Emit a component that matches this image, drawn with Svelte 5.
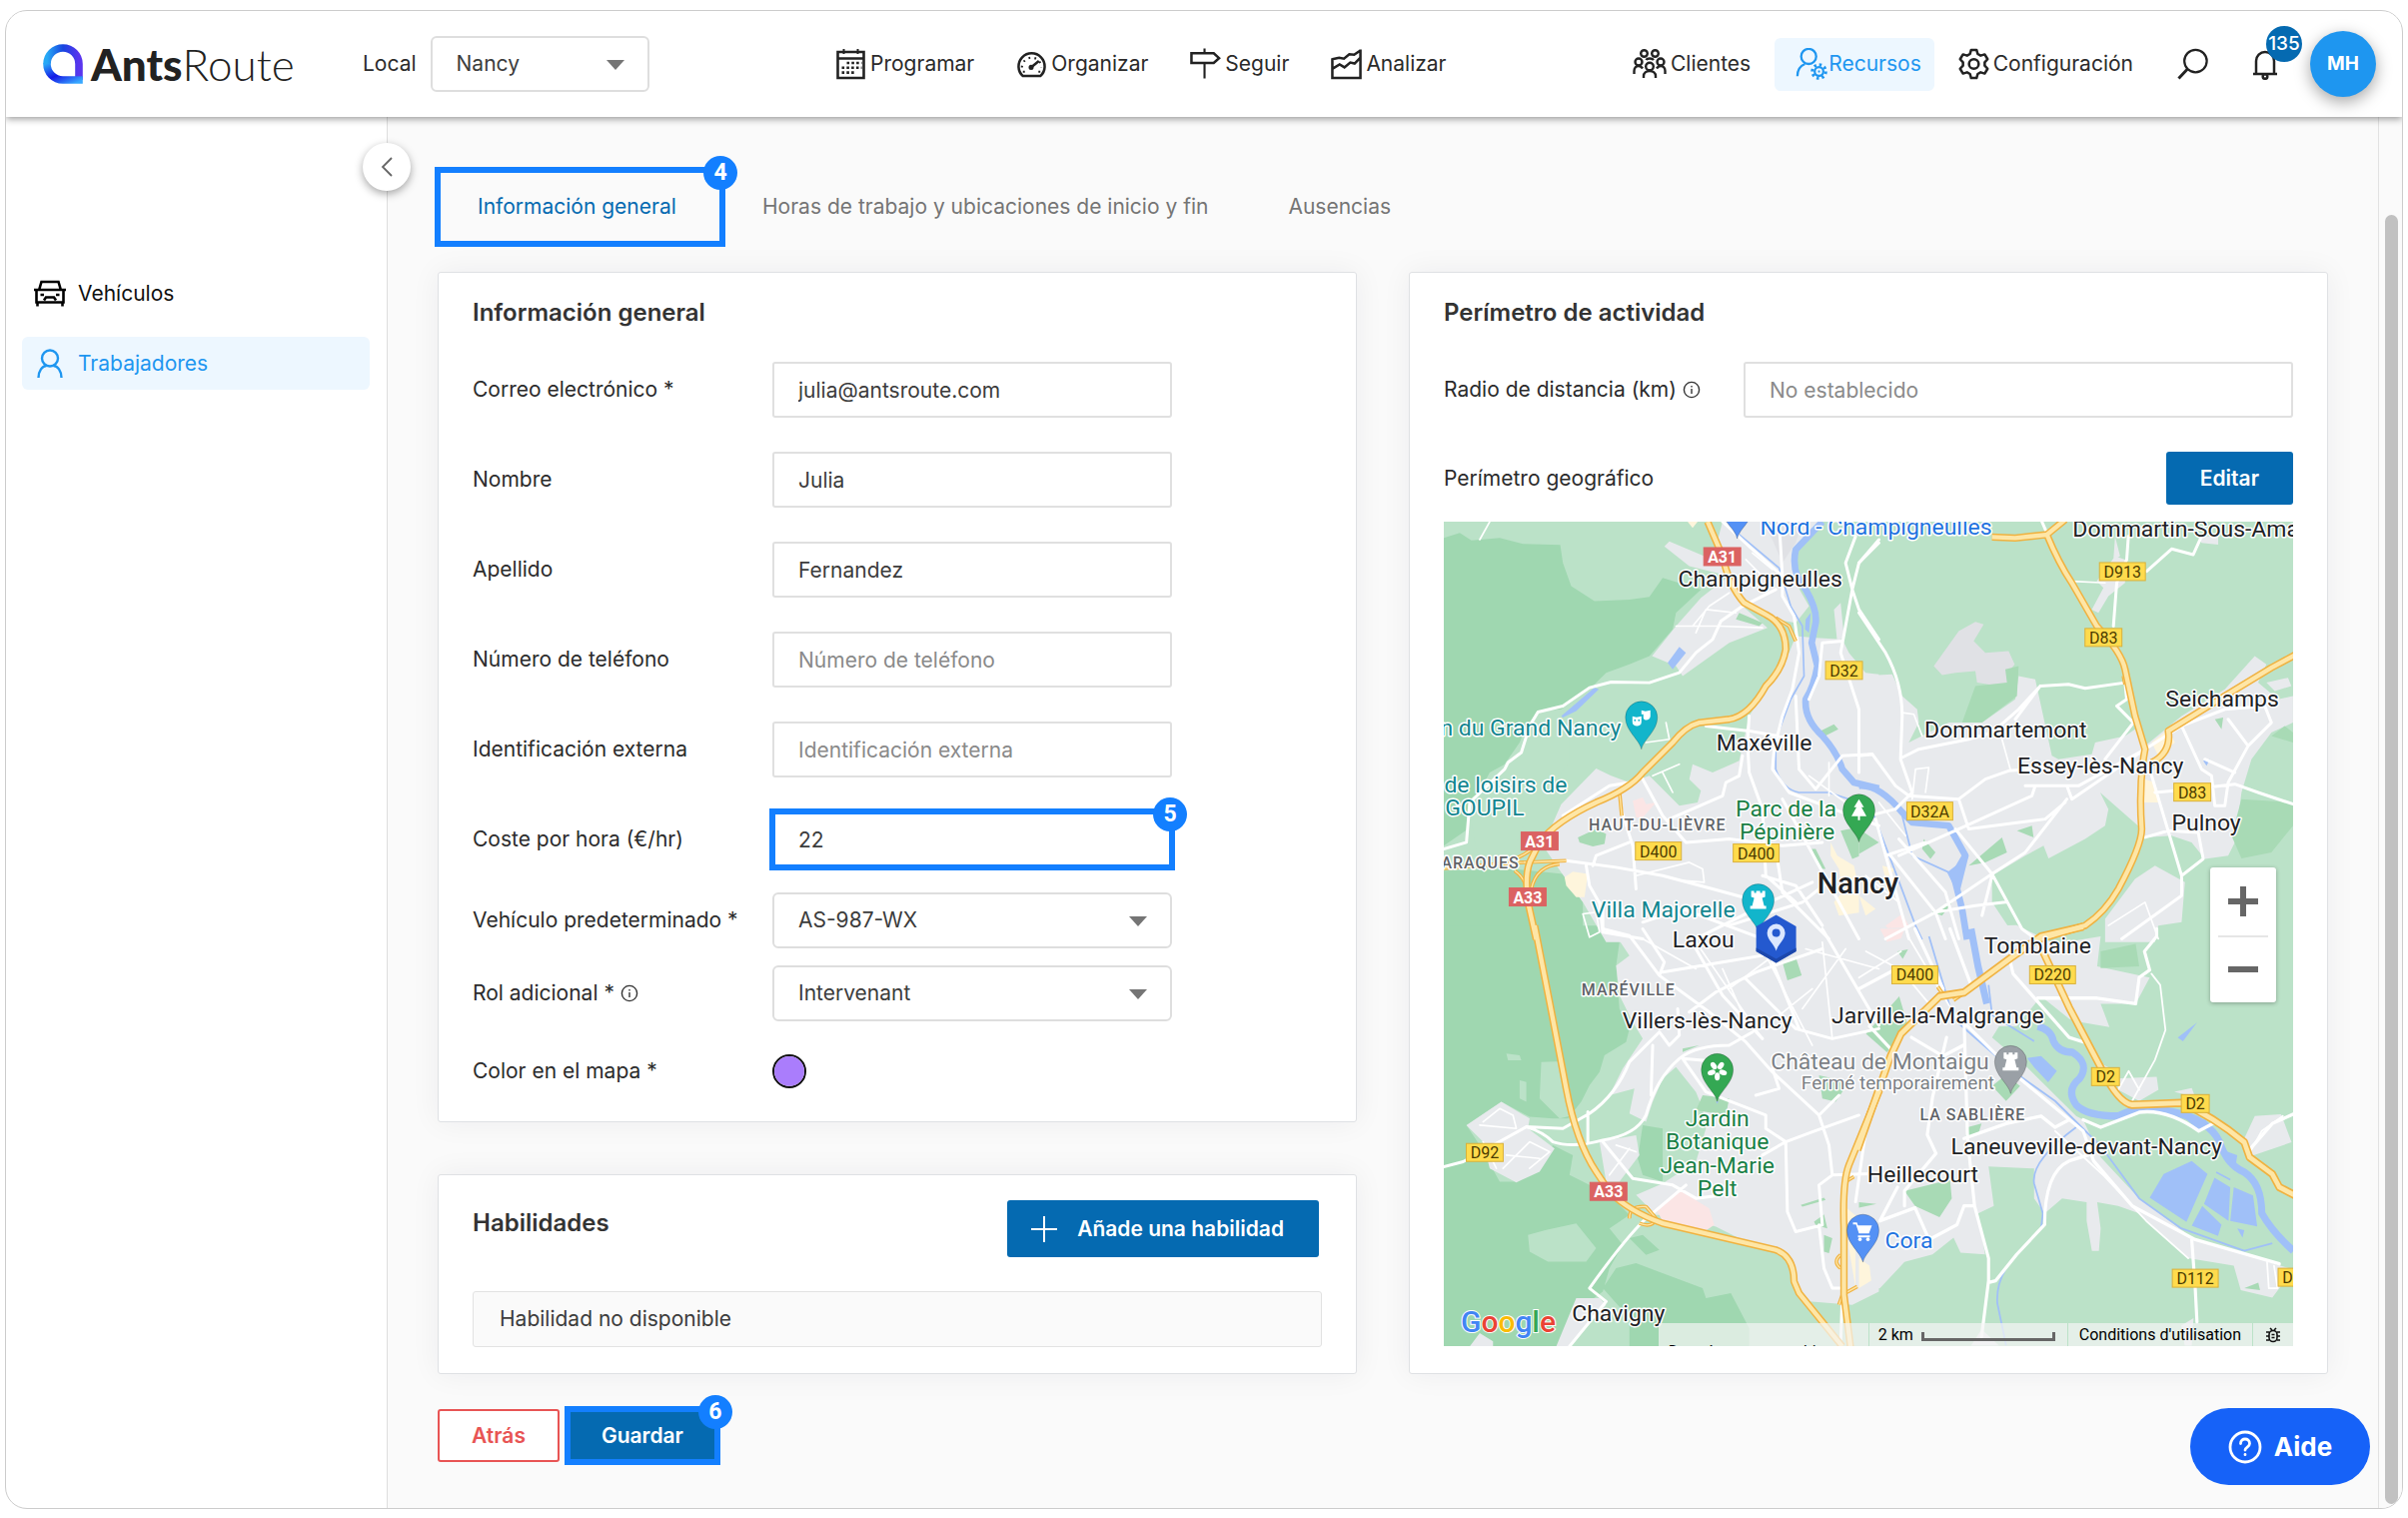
<script lang="ts">
  type Field = { id: string; label: string; value: string; placeholder?: string; step?: number };
  type Tile = {
    transform: string;
    wood?: string;
    clearing?: string;
    town: string;
    grey?: string;
    park: string;
    pink?: string;
    sand?: string;
    lake: string;
    river: string;
    canal: string;
    lane: string;
    street: string;
    highway: string;
    ramp?: string;
  };

  const tabs = ['Información general', 'Horas de trabajo y ubicaciones de inicio y fin', 'Ausencias'];
  let activeTab = 0;

  let fields: Field[] = [
    { id: 'email', label: 'Correo electrónico *', value: 'julia@antsroute.com' },
    { id: 'first-name', label: 'Nombre', value: 'Julia' },
    { id: 'last-name', label: 'Apellido', value: 'Fernandez' },
    { id: 'phone', label: 'Número de teléfono', value: '', placeholder: 'Número de teléfono' },
    { id: 'external-id', label: 'Identificación externa', value: '', placeholder: 'Identificación externa' },
    { id: 'cost', label: 'Coste por hora (€/hr)', value: '22', step: 5 }
  ];
  let color = '#aa7dfc';
  let radius = '';

  // Map geometry, one entry per tile, each in its own tile coordinates
  const tiles: Tile[] = [
    {
      transform: 'translate(-14 -12) scale(.3333)',
      wood: 'M42 85L90 70L125 92L210 85L280 103L392 106L400 160L425 230L495 275L600 270L660 262L700 205L815 240L740 310L730 360L660 440L600 465L530 490L490 530L430 575L395 600L325 605L290 650L270 700L235 750L180 830L120 870L115 960L42 1010ZM42 1085L250 1080L400 1095L460 1180L460 1290L42 1290Z',
      clearing: 'M180 790L235 760L275 730L300 640L420 610L420 760L300 900L250 1030L140 1030L120 900Z',
      town: 'M395 885L500 778L545 800L600 820L660 800L750 890L805 880L815 845L780 810L790 765L850 790L930 755L960 620L1010 540L1080 430L1100 380L1160 385L1240 390L1260 430L1310 490L1350 495L1350 1300L530 1300L460 1180L395 1090L340 1010ZM740 350L815 265L860 230L900 200L780 170L705 110L720 95L850 150L880 36L1180 36L1100 120L1100 220L1140 290L1100 340L1040 330L940 290L1015 355L900 400L760 500L740 470L668 440ZM1215 300L1235 280L1245 380L1225 400Z',
      grey: 'M1000 36L1120 36L1100 100L1060 160L1030 90Z',
      park: 'M445 985L500 960L530 975L525 1005L490 1012L450 1000ZM1235 965L1310 950L1345 1020L1270 1050ZM1165 670L1215 645L1228 660L1185 682ZM930 310L1000 340L990 350L920 330ZM1148 1020L1160 1020L1190 1080L1175 1080Z',
      pink: 'M610 875L640 865L650 885L680 880L640 925L620 925Z',
      sand: 'M405 1105L430 1088L475 1095L465 1165L440 1165L410 1130ZM1205 1000L1225 1040L1275 1070L1290 1140L1310 1150L1300 1210L1230 1220L1215 1180L1240 1150L1230 1080L1205 1040ZM775 36L805 36L790 55Z',
      lake: 'M715 460L750 412L770 430L730 480ZM395 620L495 535L508 540L440 605L400 625ZM1130 330L1145 310L1140 370L1128 360Z',
      river: 'M1180 36L1100 120Q1085 190 1130 240Q1165 300 1160 340L1148 400L1165 470Q1155 530 1130 570Q1125 630 1180 680Q1225 730 1240 780L1275 820L1350 838',
      canal: 'M930 75L1050 175L1085 290L1120 350L1125 500L1085 570L1040 690L1040 780Q1060 840 1110 850L1200 850L1290 880L1335 920',
      lane: 'M180 36L150 90M790 350L840 290L900 250M740 350L870 350L1000 355M800 370L830 300L920 310M950 150L1000 200M970 130L1030 180M650 700L720 690L710 640M670 800L750 765M700 790L730 850M620 1100L780 1060L820 1080L825 1120L760 1115M1140 800L1250 880M1200 760L1200 860M460 1215L500 1210L510 1270L480 1285Z',
      street: 'M42 1020L110 1000L120 880L225 780L235 760L275 730L300 650L325 608L400 590L480 535L545 518L660 520L750 490L800 430L850 390L875 335L940 290L1040 240M1050 36L1060 200L1060 260L1095 320L1110 430L1090 540L1060 620L1035 720L1030 780L1080 850L1240 910L1350 950M960 620L955 700L960 790L1000 900L1010 1100L1100 1180M880 36L960 110L1060 200M830 650L960 665L1100 690M1280 80L1250 160L1270 240L1235 430L1290 600L1290 790M1270 240L1290 300L1350 390M1350 100L1290 160L1270 240M1240 395L1180 400L1170 500L1140 570M410 1055L560 1075L700 1100L850 1140L960 1170M720 930L880 860L890 820L930 800L940 740M575 900L610 1010L620 1140M510 1180L520 1270L640 1290M640 810L700 920L770 1000L900 990L1060 1010L1180 1000M1100 560L1110 780L1160 840L1240 740L1330 735M470 1070L480 1130L520 1200L520 1270M400 920L540 830L600 820M490 1070L500 1040L600 1000M1040 1020L1060 1150L1200 1290M1000 1100L1100 1130L1180 1250M800 1290L1000 1190L1150 1120M900 1250L1120 1180L1220 1100M1060 870L1230 1180L1290 1290M640 1240L760 1200L1000 1290',
      highway: 'M835 36L880 140Q900 230 945 280L1010 315Q1070 345 1070 420Q1060 480 1010 530Q960 620 900 630L810 640Q770 650 730 700L640 790Q600 840 500 880Q380 935 330 1000L300 1060Q285 1100 295 1180L320 1292',
      ramp: 'M42 1078L240 1062L410 1055M1040 325L1080 350L1100 395M570 845L577 920M255 1085Q290 1110 292 1150M390 1065Q320 1070 305 1140M240 1055Q290 1040 330 1000'
    },
    {
      transform: 'translate(416 -12) scale(.3333)',
      town: 'M0 500L100 495L130 560L175 600L180 640L150 700L270 640L370 640L470 570L480 500L530 510L580 740L600 750L700 735L710 700L800 680L830 660L860 710L970 620L1100 540L1190 440L1225 465L1200 520L1260 570L1305 560L1305 640L1240 670L1180 750L1150 850L1130 1000L1110 1040L1040 1050L1000 1000L940 980L860 985L850 960L725 850L750 900L740 950L680 990L570 1048L555 1010L500 1040L400 1100L400 1180L480 1300L0 1300ZM700 300L735 235L715 215L770 140L800 150L800 220L750 260L720 310ZM740 1230L830 1110L890 1070L980 1120L970 1240L900 1250L890 1300L740 1300ZM770 80L785 140L765 150ZM1020 80L1080 80L1080 105L1030 100ZM1225 520L1290 505L1300 530L1250 545Z',
      grey: 'M225 470L300 365L350 337L375 345L345 395L380 430L450 425L468 465L445 495L450 535L355 520L350 485L290 490L250 497Z',
      park: 'M310 640L350 530L445 520L440 480L480 470L475 560L370 640ZM1120 980L1150 870L1305 880L1305 950L1240 1030L1150 1048ZM330 1070L430 985L445 1030L380 1060ZM195 990L230 1030L215 1050L190 1020ZM475 965L520 950L525 985ZM1070 630L1095 625L1090 660ZM220 1210L280 1180L250 1220ZM1240 680L1280 650L1305 670L1305 700ZM0 960L60 1000L0 1035Z',
      pink: 'M80 1250L130 1215L150 1250L110 1290Z',
      sand: 'M880 700L930 660L950 700L900 740ZM860 810L890 820L900 880L850 880ZM0 1160L50 1200L20 1220ZM70 1070L110 1080L80 1110Z',
      lake: 'M1035 755L1055 750L1045 770ZM265 1090L330 1040L300 1160Z',
      river: 'M0 830Q60 825 130 910L160 940L270 950L320 1040L285 1100L310 1200L325 1292',
      canal: 'M45 920L110 1090L170 1250L190 1292M130 920L160 1040L270 1090',
      lane: 'M640 215L740 220M130 610L165 615L190 680M60 880L140 980M160 870L170 780L210 775L200 850M750 1250L860 1180L900 1290M430 690L455 780M20 1100L120 1180',
      street: 'M0 310L80 430Q130 520 130 620L125 750L160 850L110 900L50 915M130 745L180 720L330 690L400 670L480 600L545 530L630 525L680 537L800 520M545 530L470 630M0 740L40 735L110 830L150 860L300 870L380 810L450 785L640 770M810 80L805 150L775 220L765 350M865 185L940 118L1005 135L1030 80M800 520L805 570L775 590L825 640L740 750M500 830L660 830L860 720L970 650L1100 600M120 1040L300 960L520 860L530 830M625 870L500 1030L400 1095L230 1210L80 1290M860 720L640 870L625 830M290 960L400 1095L490 1260L530 1290M300 870L330 960L560 930L620 880M50 930L150 1290M95 1040L230 1210L260 1290M970 650L1030 780L1060 800L1070 890L1100 890L1110 820L1170 710L1240 640L1220 590L1100 600M1110 630L1170 710M890 850L1000 840L1130 825L1200 850L1305 885M880 800L970 1100L970 1160L790 1290M860 985L930 965L1020 970L1035 1050L970 1100M1040 750L1130 790M230 1210L350 1190L440 1180M370 1220L400 1100M0 160L60 90M550 36L565 70M80 1040L200 1000M120 990L260 1150L300 1290',
      highway: 'M565 75L620 30M400 82L470 85L565 75Q600 160 640 220L715 350Q790 430 800 480L830 620L860 720Q840 830 850 960Q850 1010 780 1140Q740 1210 680 1250L540 1292M1320 432L1240 475L1100 560L930 665Q940 730 880 760',
      ramp: 'M795 500L800 525'
    },
    {
      transform: 'translate(-14 408) scale(.3333)',
      wood: 'M42 -10L540 -10L570 40L560 110L570 240L600 300L590 340L525 380L510 430L480 470L455 520L415 570L370 570L300 565L215 520L110 590L150 650L210 760L260 760L370 650L430 680L420 740L540 800L600 860L540 900L580 950L540 1020L520 1090L480 1120L440 1130L400 1230L380 1255L42 1255ZM520 1080L560 1020L620 1005L820 1080L830 1110L905 1095L960 1200L960 1255L600 1255L600 1170ZM640 590L700 600L700 760L640 740L625 690ZM600 930L640 920L690 965L650 980Z',
      clearing: 'M335 400L400 398L410 520L430 560L390 570L330 510ZM295 920L350 905L440 885L500 960L470 1000L355 1000L300 970ZM230 375L270 380L275 395L235 395ZM270 455L290 460L290 520L270 510Z',
      town: 'M540 -10L1350 -10L1350 1090L1270 1130L1140 1120L1100 1070L1080 980L950 940L860 895L750 860L680 860L620 800L700 765L800 700L830 600L820 540L800 490L740 415L700 450L670 520L650 580L600 555L615 480L540 500L580 420L640 330L610 280L570 200L560 110L600 80ZM110 590L215 520L300 570L295 600L375 660L330 730L260 762L180 720L160 640ZM510 640L620 620L630 680L570 760L530 760ZM380 1255L440 1110L510 1110L530 1130L420 1255ZM120 1255L150 1215L190 1240L190 1255Z',
      park: 'M1060 100L1100 85L1118 140L1075 155ZM820 500L900 510L890 560L800 545ZM1115 830L1185 808L1190 815L1120 835ZM1155 880L1185 858L1195 900L1160 890ZM1185 920L1210 930L1200 975L1185 970ZM1170 440L1260 460L1220 520L1180 510ZM1310 320L1350 290L1350 350ZM760 360L810 350L760 370Z',
      pink: 'M680 840L755 788L840 840L855 890L825 910L700 880Z',
      sand: 'M1255 840L1290 870L1330 980L1320 1050L1280 1080L1260 960Z',
      lake: 'M860 520L868 518L864 526Z',
      river: '',
      canal: '',
      lane: 'M160 640L200 720M150 590L260 600L250 560L210 540L160 580M220 720L300 640L360 670L300 720M230 680L330 690M540 740L600 660M560 650L620 670M1000 300L1150 180M900 180L1060 60M880 120L960 300M1130 60L1350 120M1250 60L1120 240M1180 40L1210 330M800 40L1000 330M1000 60L1150 350M640 30L800 120',
      street: 'M42 715L100 700L290 595L400 600L480 555Q560 500 600 400L690 310L720 350L750 320L745 240M290 595Q340 610 370 640Q430 660 520 635Q620 620 650 560Q680 450 750 390Q800 350 900 350L970 310M670 350L665 500M475 550L475 640M520 640L610 750L730 770L800 810L880 800M770 770L640 880Q580 940 480 1080L530 1120L420 1255M520 0L600 20L690 140L840 250L950 340L1030 430L1170 560L1200 650L1210 740L1350 735M700 130L880 100L1000 80M690 140L705 100L640 0M950 150L1100 300L1210 330L1350 300M760 390L830 490L960 540L1010 560L1010 600L1070 640L1150 610L1290 560M780 250L860 190L980 130L1180 60M1000 680L1070 640L1075 850L1100 910L1180 890L1170 770L1210 740M1170 890L1185 1020L1210 1080L1240 1080M1030 100L1110 300M1180 0L1350 290M980 500L1050 480L1030 420M1310 610L1280 820M1240 1100L1235 1255M800 60L880 200L1000 330M1170 560L1230 500M880 400L760 390',
      highway: 'M315 -10L360 220L410 480Q440 640 500 730L540 790Q600 850 700 885L1040 965Q1095 985 1095 1060L1110 1095L1240 1255M1352 485L1260 710Q1240 760 1245 900L1245 1100L1265 1258',
      ramp: 'M600 870Q600 830 650 835L680 870Q670 900 630 885M1235 980Q1210 1000 1235 1020M1285 1075L1240 1100L1230 1130M1250 760L1275 745'
    },
    {
      transform: 'translate(416 408) scale(.351 .375)',
      town: 'M-10 0L450 -10L560 40L690 20L680 100L780 120L830 130L790 200L690 200L715 262L640 250L600 240L520 180L450 260L400 260L380 290L480 370L620 500L640 510L690 610L800 720L930 810L950 830L1100 870L1240 910L1180 985L1090 965L1070 900L940 880L800 760L740 740L680 730L690 800L685 860L665 860L650 780L650 730L580 720L530 760L500 720L500 640L370 635L385 740L340 760L360 870L290 865L270 825L210 870L130 890L60 960L-10 970ZM735 400L850 395L855 430L800 460L740 430ZM1130 500L1205 495L1235 570L1110 610L1100 560ZM900 435L950 425L960 450ZM320 1113L350 1070L400 1113ZM920 1060L955 1040L950 1113L930 1113ZM690 360L735 380L700 390Z',
      park: 'M20 280L115 180L140 260L80 330ZM380 420L420 390L460 420L420 460ZM130 700L260 670L265 720L230 770L160 740ZM690 60L790 40L800 100L690 105ZM310 530L350 520L340 550L305 555ZM0 730L50 735L0 745ZM110 60L140 55L125 80ZM1100 960L1140 945L1145 965Z',
      pink: 'M60 0L130 0L120 25L80 35Z',
      sand: 'M0 880L30 900L35 940L0 960Z',
      lake: 'M830 718L870 655L950 620L995 655L935 783ZM1015 665L1060 690L1055 780L985 735ZM1070 690L1125 712L1137 795L1060 780ZM980 740L1035 790L1025 820L950 793ZM1050 595L1080 605L1075 635L1045 620ZM910 290L965 250L925 300ZM930 505L990 510L1000 530L970 538ZM480 345L520 340L565 380L540 410L500 370ZM1080 800L1100 805L1095 825Z',
      river: 'M320 0L340 100L365 200M510 260Q550 270 555 300Q570 330 610 330Q660 360 630 400Q590 430 620 470Q650 500 740 500Q800 470 900 490Q1000 510 1030 570Q1050 630 1100 650Q1150 680 1150 760Q1180 810 1240 860',
      canal: 'M200 20L270 240L440 380L560 460L690 580L800 720L920 800L1100 860L1180 840M620 530Q490 620 500 680L525 760L520 800L450 870Q390 930 395 1000L420 1113M370 150L380 230L500 300M1020 650L1060 670',
      lane: 'M835 120L860 150L875 270L845 350L780 460M740 430L770 380L800 430M1120 590L1150 540L1210 500M940 880L820 780L700 660L560 540M1165 890L1170 960L1195 960L1185 900M20 60L120 110L200 200M0 130L120 60M140 20L280 240',
      street: 'M260 0L320 150M160 0L240 160M300 250L460 400L640 540L670 620L780 740L960 830L1200 895M300 240L310 560L330 740L370 880L370 940L350 1090M370 945L390 940L450 870L530 790Q530 650 600 620L670 600M950 830L960 960L965 1050M640 510L690 530L800 490Q880 480 970 540L1020 515M430 80L440 120L600 290L650 305M510 185L680 185L790 200L800 130L830 110L815 60L850 20L850 0M130 740L130 700L220 600L195 550L210 450L250 290M330 740L300 740L280 790L200 830L160 745L60 780L110 690M300 560L420 520L520 500L560 530L600 510M120 100L0 160M150 290L240 340L300 310M30 260L100 330M1115 590L1180 520L1240 495',
      highway: 'M-4 590L90 340L120 280L230 180L300 170L430 80L520 20L640 -6M525 60L600 210L690 370Q740 465 780 470L920 465Q1010 500 1100 570L1115 610L1180 655L1200 690L1245 712',
      ramp: 'M225 155L240 175M270 190L310 165'
    }
  ];

  const shields = [
    { x: 279, y: 35, name: 'A31', main: true },
    { x: 96, y: 320, name: 'A31', main: true },
    { x: 84, y: 376, name: 'A33', main: true },
    { x: 165, y: 671, name: 'A33', main: true },
    { x: 680, y: 50, name: 'D913' },
    { x: 661, y: 116, name: 'D83' },
    { x: 401, y: 149, name: 'D32' },
    { x: 750, y: 271, name: 'D83' },
    { x: 487, y: 290, name: 'D32A' },
    { x: 215, y: 330, name: 'D400' },
    { x: 313, y: 332, name: 'D400' },
    { x: 472, y: 454, name: 'D400' },
    { x: 610, y: 454, name: 'D220' },
    { x: 663, y: 556, name: 'D2' },
    { x: 753, y: 583, name: 'D2' },
    { x: 41, y: 632, name: 'D92' },
    { x: 753, y: 758, name: 'D112' },
    { x: 859, y: 757, name: 'D112' }
  ];

  const places = [
    { x: 317, y: 65, name: 'Champigneulles' },
    { x: 762, y: 15, name: 'Dommartin-Sous-Amance' },
    { x: 563, y: 216, name: 'Dommartemont' },
    { x: 780, y: 185, name: 'Seichamps' },
    { x: 658, y: 252, name: 'Essey-lès-Nancy' },
    { x: 764, y: 309, name: 'Pulnoy' },
    { x: 321, y: 229, name: 'Maxéville' },
    { x: 415, y: 372, name: 'Nancy', kind: 'city' },
    { x: 260, y: 427, name: 'Laxou' },
    { x: 264, y: 508, name: 'Villers-lès-Nancy' },
    { x: 495, y: 503, name: 'Jarville-la-Malgrange' },
    { x: 595, y: 433, name: 'Tomblaine' },
    { x: 644, y: 634, name: 'Laneuveville-devant-Nancy' },
    { x: 480, y: 662, name: 'Heillecourt' },
    { x: 175, y: 801, name: 'Chavigny' },
    { x: 214, y: 309, name: 'HAUT-DU-LIÈVRE', kind: 'area' },
    { x: 31, y: 347, name: 'BARAQUES', kind: 'area' },
    { x: 185, y: 475, name: 'MARÉVILLE', kind: 'area' },
    { x: 530, y: 600, name: 'LA SABLIÈRE', kind: 'area' },
    { x: 433, y: 13, name: 'Nord - Champigneulles', kind: 'shop' },
    { x: 466, y: 728, name: 'Cora', kind: 'shop' },
    { x: 87, y: 214, name: 'n du Grand Nancy', kind: 'sight' },
    { x: 62, y: 271, name: 'de loisirs de', kind: 'sight' },
    { x: 41, y: 294, name: 'GOUPIL', kind: 'sight' },
    { x: 220, y: 396, name: 'Villa Majorelle', kind: 'sight' },
    { x: 343, y: 295, name: 'Parc de la', kind: 'garden' },
    { x: 344, y: 318, name: 'Pépinière', kind: 'garden' },
    { x: 274, y: 606, name: 'Jardin', kind: 'garden' },
    { x: 274, y: 629, name: 'Botanique', kind: 'garden' },
    { x: 274, y: 653, name: 'Jean-Marie', kind: 'garden' },
    { x: 274, y: 676, name: 'Pelt', kind: 'garden' },
    { x: 437, y: 549, name: 'Château de Montaigu', kind: 'closed' },
    { x: 455, y: 569, name: 'Fermé temporairement', kind: 'closed note' }
  ];

  const pins = [
    { x: 198, y: 228, color: '#12b5cb', icon: 'masks' },
    { x: 315, y: 411, color: '#12b5cb', icon: 'tower' },
    { x: 416, y: 321, color: '#34a853', icon: 'tree' },
    { x: 274, y: 581, color: '#34a853', icon: 'flower' },
    { x: 568, y: 573, color: '#9aa0a6', icon: 'tower' },
    { x: 420, y: 742, color: '#5491f5', icon: 'cart' },
    { x: 294, y: 17, color: '#5491f5', icon: '' }
  ];
</script>

{#snippet marker(step: number)}
  <span class="marker"><span class="marker-step">{step}</span></span>
{/snippet}

{#snippet caret()}
  <svg class="caret" viewBox="0 0 18 10" aria-hidden="true"><path d="M0 0h18l-9 10z" fill="#757575" /></svg>
{/snippet}

{#snippet info()}
  <svg class="info" viewBox="0 0 18 18" fill="none" stroke="#333" stroke-width="1.4" aria-hidden="true">
    <circle cx="9" cy="9" r="7.6" /><path d="M9 8v5M9 5v1.6" />
  </svg>
{/snippet}

<div class="window">
  <header>
    <div class="brand-side">
      <a class="logo" href="#home" aria-label="AntsRoute">
        <svg viewBox="0 0 40 40" aria-hidden="true">
          <defs>
            <linearGradient id="logo-top" x1="0" y1="0" x2="1" y2="0">
              <stop offset="0" stop-color="#27a9f5" /><stop offset=".5" stop-color="#1745e0" /><stop offset="1" stop-color="#5a35ee" />
            </linearGradient>
            <linearGradient id="logo-bottom" x1="0" y1="0" x2="1" y2="1">
              <stop offset="0" stop-color="#2aa5f7" /><stop offset=".5" stop-color="#1418e6" /><stop offset="1" stop-color="#38a8ff" />
            </linearGradient>
          </defs>
          <path d="M4 20a16 16 0 0 1 32 0v16" fill="none" stroke="url(#logo-top)" stroke-width="7.6" />
          <path d="M4 19.5a16 16 0 0 0 16 16.5h19.8" fill="none" stroke="url(#logo-bottom)" stroke-width="7.6" />
        </svg>
        <span><b>Ants</b>Route</span>
      </a>
      <label for="site">Local</label>
      <div class="select site">
        <select id="site"><option>Nancy</option></select>
        {@render caret()}
      </div>
    </div>

    <nav class="nav">
      <a href="#plan">
        <svg viewBox="0 0 30 32" aria-hidden="true">
          <path d="M2 4h26v26H2zM2 10.5h26" fill="none" stroke="#222" stroke-width="2.6" />
          <path d="M8 1v5M22 1v5" stroke="#222" stroke-width="2" />
          <path d="M11 15h15M6 19.8h20M6 24.6h14" stroke="#222" stroke-width="2.6" stroke-dasharray="2.6 2.2" />
        </svg>Programar
      </a>
      <a href="#organize">
        <svg viewBox="0 0 32 32" fill="none" stroke="#222" aria-hidden="true">
          <path d="M7 28.5a13.5 13.5 0 1 1 18 0z" stroke-width="2.6" />
          <path d="M16 19l7.5-6" stroke-width="2.6" />
          <circle cx="15.5" cy="19.5" r="2.6" fill="#222" stroke="none" />
          <path d="M6 19.5a10 10 0 0 1 20 0" stroke-width="2.2" stroke-dasharray="1.8 4.4" />
          <path d="M7 24h2M23 24h2" stroke-width="2" />
        </svg>Organizar
      </a>
      <a href="#follow">
        <svg viewBox="0 0 32 32" fill="none" stroke="#222" aria-hidden="true">
          <path d="M1.5 5h23l5.500 5-5.500 5h-23z" stroke-width="2.6" />
          <path d="M15 0v5M15 16v15" stroke-width="2.2" />
        </svg>Seguir
      </a>
      <a href="#analyse">
        <svg viewBox="0 0 32 32" fill="none" stroke="#222" stroke-width="2.6" aria-hidden="true">
          <path d="M1.5 10v20.500h29V1M1.500 11l7-1.500 5 1L19 6l5 .5L30.500 2M1.500 21L9 16.500l5 3 6-5 4.500 1 6-6" />
        </svg>Analizar
      </a>
    </nav>

    <nav class="nav account">
      <a href="#clients">
        <svg class="wide" viewBox="0 0 34 32" fill="none" stroke="#222" stroke-width="2.4" aria-hidden="true">
          <circle cx="11.5" cy="5.5" r="3.3" /><circle cx="22.5" cy="5.5" r="3.3" />
          <circle cx="6" cy="14" r="3.5" /><circle cx="28" cy="14" r="3.5" /><circle cx="17" cy="18.5" r="3.8" />
          <path d="M1.5 26v-3c0-3 2-5 4.500-5s3 1 4 2.500M32.500 26v-3c0-3-2-5-4.500-5s-3 1-4 2.500M11 30v-2c0-3 2.500-5 6-5s6 2 6 5v2M13.500 12c1-2 6-2 7.500 0" />
        </svg>Clientes
      </a>
      <a class="active" href="#resources">
        <svg class="wide" viewBox="0 0 34 34" fill="none" stroke="#1e96f0" aria-hidden="true">
          <circle cx="14" cy="9" r="8" stroke-width="2.4" />
          <path d="M2 30c0-7 3-11 8-13" stroke-width="2.4" />
          <circle cx="25" cy="25" r="4.6" stroke-width="2.4" />
          <circle cx="25" cy="25" r="7.2" stroke-width="3.2" stroke-dasharray="2.6 3.05" />
          <path d="M25 24v2" stroke-width="2" />
        </svg>Recursos
      </a>
      <a href="#settings">
        <svg viewBox="0 0 32 32" fill="none" stroke="#222" stroke-width="2.6" aria-hidden="true">
          <path d="M13.2 1.500h5.600l1.200 4.200 3 1.700 4.200-1.300 3 5-3 3.200v3.400l3 3.200-3 5-4.200-1.300-3 1.700-1.200 4.200h-5.600L12 26.300l-3-1.700-4.200 1.300-3-5 3-3.200v-3.400l-3-3.200 3-5L9 7.400l3-1.700z" stroke-linejoin="round" />
          <circle cx="16" cy="16" r="5" />
        </svg>Configuración
      </a>
      <button class="icon-button" aria-label="Buscar">
        <svg viewBox="0 0 32 32" fill="none" stroke="#222" stroke-width="2.3" aria-hidden="true">
          <circle cx="19" cy="13" r="11.6" /><path d="M10.5 21.500L1.500 31" stroke-width="3" />
        </svg>
      </button>
      <button class="icon-button bell" aria-label="Notificaciones">
        <svg viewBox="0 0 26 32" fill="none" stroke="#222" stroke-width="2.5" aria-hidden="true">
          <path d="M4 26V13a9 9 0 0 1 18 0v13M1 26h24" /><circle cx="13" cy="28.5" r="2.3" />
        </svg>
        <span class="count">135</span>
      </button>
      <button class="avatar">MH</button>
    </nav>
  </header>

  <div class="body">
    <aside>
      <a href="#vehicles">
        <svg viewBox="0 0 32 27" fill="none" stroke="#000" stroke-width="2.6" aria-hidden="true">
          <path d="M5 10L7.500 1.500h17L27 10M0 9.500h32M2.500 10v12h27V10M6.500 14.500h3.500M22 14.500h3.500M10 20l2-3h8l2 3M3.500 22v4M28.500 22v4" />
        </svg>Vehículos
      </a>
      <a class="active" href="#workers">
        <svg viewBox="0 0 32 32" fill="none" stroke="#1e96f0" stroke-width="2.4" aria-hidden="true">
          <circle cx="16" cy="10.5" r="8" /><path d="M4.500 30c0-7 4-12 8-12M27.500 30c0-7-4-12-8-12" />
        </svg>Trabajadores
      </a>
      <button class="collapse" aria-label="Contraer el menú">
        <svg viewBox="0 0 12 20" fill="none" stroke="#666" stroke-width="1.8" aria-hidden="true"><path d="M11 1L2 10l9 9" /></svg>
      </button>
    </aside>

    <main>
      <div class="tabs" role="tablist">
        {#each tabs as tab, i}
          <button role="tab" class:selected={i === activeTab} aria-selected={i === activeTab} on:click={() => (activeTab = i)}>
            {tab}
            {#if i === 0}{@render marker(4)}{/if}
          </button>
        {/each}
      </div>

      <div class="columns">
        <div class="column">
          <section class="card">
            <h2>Información general</h2>
            <div class="fields">
              {#each fields as field}
                <div class="row">
                  <label for={field.id}>{field.label}</label>
                  <div class="control">
                    <input id={field.id} type="text" placeholder={field.placeholder} bind:value={field.value} />
                    {#if field.step}{@render marker(field.step)}{/if}
                  </div>
                </div>
              {/each}
            </div>
            <div class="fields compact">
              <div class="row">
                <label for="vehicle">Vehículo predeterminado *</label>
                <div class="select control">
                  <select id="vehicle"><option>AS-987-WX</option></select>
                  {@render caret()}
                </div>
              </div>
              <div class="row">
                <label for="role">Rol adicional * {@render info()}</label>
                <div class="select control">
                  <select id="role"><option>Intervenant</option></select>
                  {@render caret()}
                </div>
              </div>
            </div>
            <div class="row color-row">
              <label for="color">Color en el mapa *</label>
              <input id="color" type="color" bind:value={color} />
            </div>
          </section>

          <section class="card skills">
            <div class="skills-head">
              <h2>Habilidades</h2>
              <button class="primary add">
                <svg viewBox="0 0 26 26" stroke="#fff" stroke-width="2" aria-hidden="true"><path d="M13 0v26M0 13h26" /></svg>
                Añade una habilidad
              </button>
            </div>
            <p class="empty">Habilidad no disponible</p>
          </section>
        </div>

        <section class="card perimeter">
          <h2>Perímetro de actividad</h2>
          <div class="row">
            <label for="radius">Radio de distancia (km) {@render info()}</label>
            <input id="radius" type="text" placeholder="No establecido" bind:value={radius} />
          </div>
          <div class="map-head">
            <span>Perímetro geográfico</span>
            <button class="primary">Editar</button>
          </div>

          <div class="map">
            <svg class="map-canvas" viewBox="0 0 851 826" role="img" aria-label="Mapa de Nancy">
              <rect width="851" height="826" fill="#bbe2c8" />
              {#each tiles as tile}
                <g transform={tile.transform}>
                  <path d={tile.wood} fill="#9fd7b0" />
                  <path d={tile.clearing} fill="#bbe2c8" />
                </g>
              {/each}
              {#each tiles as tile}
                <g transform={tile.transform}>
                  <path d={tile.town} fill="#e8eaed" />
                  <path d={tile.grey} fill="#e0e1e5" />
                  <path d={tile.park} fill="#a8dab5" />
                  <path d={tile.pink} fill="#fbe5e5" />
                  <path d={tile.sand} fill="#fef5dc" />
                </g>
              {/each}
              {#each tiles as tile}
                <g transform={tile.transform} fill="none" stroke="#a0c0f8" stroke-linejoin="round">
                  <path d={tile.lake} fill="#a0c0f8" stroke="none" />
                  <path d={tile.river} stroke-width="20" />
                  <path d={tile.canal} stroke-width="5" />
                </g>
              {/each}
              {#each tiles as tile}
                <g transform={tile.transform} fill="none" stroke="#fff" stroke-linejoin="round" stroke-linecap="round">
                  <path d={tile.lane} stroke-width="5" />
                  <path d={tile.street} stroke-width="9" />
                </g>
              {/each}
              {#each tiles as tile}
                <g transform={tile.transform} fill="none" stroke="#f0b240" stroke-linejoin="round">
                  <path d={tile.ramp} stroke-width="11" />
                  <path d={tile.ramp} stroke-width="4" stroke="#fee6a6" />
                  <path d={tile.highway} stroke-width="22" />
                </g>
              {/each}
              {#each tiles as tile}
                <path transform={tile.transform} d={tile.highway} fill="none" stroke="#fee6a6" stroke-width="13" />
              {/each}

              {#each shields as shield}
                {@const width = shield.name.length * 9 + 10}
                <g transform="translate({shield.x} {shield.y})" class="shield" class:main={shield.main}>
                  <rect x={-width / 2} y="-9" {width} height="18" />
                  <text y="6">{shield.name}</text>
                </g>
              {/each}

              {#each pins as pin}
                <g transform="translate({pin.x} {pin.y})">
                  <path d="M0 0C-2-10-16-18-16-32a16 16 0 0 1 32 0C16-18 2-10 0 0Z" fill={pin.color} stroke="#0003" />
                  {#if pin.icon === 'tree'}
                    <path d="M0-43l5 8H2.500l5 9H1v4h-2v-4h-6.500l5-9H-5z" fill="#fff" />
                  {:else if pin.icon === 'tower'}
                    <path d="M-8-23v-3h2l2-8-3-1v-6h3v2h2v-2h4v2h2v-2h3v6l-3 1 2 8h2v3z" fill="#fff" />
                  {:else if pin.icon === 'flower'}
                    {#each [0, 72, 144, 216, 288] as turn}
                      <ellipse cx="0" cy="6" rx="2.6" ry="4" fill="#fff" transform="translate(0 -31) rotate({turn})" />
                    {/each}
                  {:else if pin.icon === 'cart'}
                    <path d="M-10-40h4l1 3H9l-3 8H-4l-3-9h-3zM-5-27H7v2H-5z" fill="#fff" />
                    <circle cx="-3" cy="-23" r="1.8" fill="#fff" /><circle cx="5" cy="-23" r="1.8" fill="#fff" />
                  {:else if pin.icon === 'masks'}
                    <path d="M0-39l4 1 5-1v6c0 4-6 5-7 2v-4H0zM-9-33l4 1 5-1v6c0 5-9 5-9 0z" fill="#fff" />
                    <circle cx="-6.5" cy="-29" r=".9" fill={pin.color} /><circle cx="-2.5" cy="-29" r=".9" fill={pin.color} />
                  {/if}
                </g>
              {/each}

              {#each places as place}
                <text class="place {place.kind ?? ''}" x={place.x} y={place.y}>{place.name}</text>
              {/each}

              <g transform="translate(333 418)">
                <path d="M0-24l20 11.500v25L0 24l-20-11.500v-25z" fill="#2459cf" />
                <path d="M-20 9v3.500L0 24l20-11.500V9L0 20z" fill="#1c47ab" />
                <path d="M0 12C-2 5-9 1-9-6a9 9 0 0 1 18 0C9 1 2 5 0 12z" fill="#dbe7ff" />
                <circle cy="-6" r="4" fill="#2459cf" />
              </g>

              <text class="google" x="17" y="812"><tspan fill="#4285f4">G</tspan><tspan fill="#ea4335">o</tspan><tspan fill="#fbbc05">o</tspan><tspan fill="#4285f4">g</tspan><tspan fill="#34a853">l</tspan><tspan fill="#ea4335">e</tspan></text>
            </svg>

            <div class="zoom">
              <button aria-label="Acercar"><svg viewBox="0 0 30 30" aria-hidden="true"><path d="M12 0h6v12h12v6H18v12h-6V18H0v-6h12z" fill="#666" /></svg></button>
              <button aria-label="Alejar"><svg viewBox="0 0 30 30" aria-hidden="true"><path d="M0 12h30v6H0z" fill="#666" /></svg></button>
            </div>

            <div class="credits">
              <span class="source">Données cartographiques</span>
              <span class="scale">2 km <i></i></span>
              <a href="#terms">Conditions d'utilisation</a>
              <button aria-label="Signaler una error">
                <svg viewBox="0 0 16 16" fill="none" stroke="#111" stroke-width="1.6" aria-hidden="true">
                  <rect x="4" y="3.5" width="8" height="11" rx="4" /><path d="M1 5h3M12 5h3M1 9h3M12 9h3M1 13h3M12 13h3M5 1l2 2M11 1L9 3M6.500 7.500h3M6.500 10.500h3" />
                </svg>
              </button>
            </div>
          </div>
        </section>
      </div>

      <div class="actions">
        <button class="danger">Atrás</button>
        <button class="primary">Guardar{@render marker(6)}</button>
      </div>
    </main>

    <div class="scrollbar"><div class="thumb"></div></div>
  </div>

  <button class="help">
    <svg viewBox="0 0 34 34" fill="none" stroke="#fff" stroke-width="2.8" stroke-linecap="round" aria-hidden="true">
      <circle cx="17" cy="17" r="15" /><path d="M12.5 13.500c0-6 9-6 9 0 0 3.500-4.500 3.500-4.500 6.500M17 24.500v.2" />
    </svg>
    Aide
  </button>
</div>

<style>
  :global(body) {
    background: #fff;
  }

  * {
    box-sizing: border-box;
  }

  button,
  input,
  select {
    font: inherit;
    color: inherit;
  }

  button {
    cursor: pointer;
    border: 0;
    background: none;
    padding: 0;
  }

  a {
    color: inherit;
    text-decoration: none;
  }

  .window {
    position: relative;
    display: flex;
    flex-direction: column;
    min-height: calc(100vh - 19px);
    margin: 10px 5px 9px;
    border: 1px solid #ccc;
    border-radius: 22px;
    overflow: hidden;
    background: #fff;
    color: #2b2b2b;
    font: 21px/30px Inter, sans-serif;
  }

  header {
    position: relative;
    z-index: 2;
    display: flex;
    align-items: center;
    justify-content: space-between;
    height: 106px;
    padding: 0 26px 0 37px;
    background: #fff;
    box-shadow: 0 2px 7px rgba(0, 0, 0, 0.4);
  }

  .brand-side {
    display: flex;
    align-items: center;
    gap: 14px;
  }

  .logo {
    display: flex;
    align-items: center;
    gap: 8px;
    width: 252px;
    margin-right: 54px;
    font: 300 44px/44px Lato, sans-serif;
    color: #222;
  }

  .logo svg {
    width: 40px;
    height: 40px;
  }

  .logo b {
    font-weight: 900;
  }

  .select {
    position: relative;
  }

  .select select {
    appearance: none;
    width: 100%;
    height: 56px;
    padding: 0 24px;
    border: 2px solid #dedede;
    border-radius: 6px;
    background: #fff;
    color: #3c3c3c;
  }

  .site {
    width: 219px;
  }

  .caret {
    position: absolute;
    top: 24px;
    right: 25px;
    width: 18px;
    height: 10px;
    pointer-events: none;
  }

  .nav {
    display: flex;
    align-items: center;
    gap: 42px;
  }

  .nav a {
    display: flex;
    align-items: center;
    gap: 4px;
    height: 53px;
  }

  .nav svg {
    width: 31px;
    height: 32px;
  }

  .nav svg.wide {
    width: 34px;
  }

  .account {
    gap: 24px;
  }

  .account .active {
    gap: 0;
    padding: 0 13px 0 20px;
  }

  .active {
    border-radius: 6px;
    background: #edf7ff;
    color: #1e96f0;
  }

  .icon-button {
    position: relative;
    display: flex;
    margin-left: 20px;
  }

  .bell svg {
    width: 26px;
  }

  .count {
    position: absolute;
    top: -22px;
    right: -24px;
    width: 36px;
    height: 36px;
    border-radius: 50%;
    background: #056ab1;
    color: #fff;
    font-size: 19px;
    font-weight: 500;
    line-height: 36px;
    text-align: center;
  }

  .avatar {
    width: 66px;
    height: 66px;
    margin-left: 8px;
    border-radius: 50%;
    background: #1e96f0;
    box-shadow: 0 5px 16px rgba(0, 0, 0, 0.35);
    color: #fff;
    font-size: 19px;
    font-weight: 700;
  }

  .body {
    display: flex;
    flex: 1;
  }

  aside {
    position: relative;
    z-index: 1;
    display: flex;
    flex-direction: column;
    gap: 17px;
    width: 382px;
    padding: 150px 17px 0 16px;
    border-right: 1px solid #dedede;
    color: #111;
  }

  aside a {
    display: flex;
    align-items: center;
    gap: 12px;
    height: 53px;
    padding-left: 12px;
  }

  aside a svg {
    width: 32px;
    height: 32px;
  }

  aside .active {
    color: #1e96f0;
  }

  .collapse {
    position: absolute;
    top: 26px;
    right: -24px;
    display: flex;
    align-items: center;
    justify-content: center;
    width: 48px;
    height: 48px;
    border-radius: 50%;
    background: #fff;
    box-shadow: 0 3px 9px rgba(0, 0, 0, 0.35);
  }

  .collapse svg {
    width: 12px;
    height: 20px;
  }

  main {
    flex: 1;
    min-width: 0;
    padding: 53px 50px 46px 50px;
    background: #fafafa;
  }

  .tabs {
    display: flex;
    margin-bottom: 28px;
  }

  .tabs button {
    position: relative;
    height: 74px;
    padding: 0 40px;
    color: #757575;
    text-align: left;
  }

  .tabs button:first-child {
    min-width: 285px;
  }

  .tabs .selected {
    color: #056ab1;
  }

  .marker {
    position: absolute;
    inset: -3px;
    border: 6px solid #137fff;
    pointer-events: none;
  }

  .marker-step {
    position: absolute;
    top: -17px;
    right: -18px;
    width: 34px;
    height: 34px;
    border-radius: 50%;
    background: #137fff;
    color: #fff;
    font: 700 23px/34px Roboto, sans-serif;
    text-align: center;
  }

  .columns {
    display: grid;
    grid-template-columns: 1fr 1fr;
    gap: 52px;
  }

  .column {
    display: flex;
    flex-direction: column;
    gap: 52px;
  }

  .card {
    padding: 25px 34px 33px;
    border: 1px solid #dfe1e4;
    border-radius: 3px;
    background: #fff;
    box-shadow: 0 0 30px rgba(20, 20, 50, 0.06);
  }

  h2 {
    margin: 0 0 34px;
    color: #333;
    font-size: 24px;
    font-weight: 600;
    line-height: 30px;
  }

  .fields {
    display: grid;
    gap: 34px;
  }

  .compact {
    gap: 17px;
    margin: 25px 0 33px;
  }

  .row {
    display: grid;
    grid-template-columns: 300px 1fr;
    align-items: center;
  }

  .control {
    position: relative;
    width: 400px;
  }

  .info {
    width: 18px;
    height: 18px;
    vertical-align: -2px;
  }

  input[type='text'] {
    display: block;
    width: 100%;
    height: 56px;
    padding: 0 24px;
    border: 2px solid #e0e0e0;
    border-radius: 3px;
    background: #fff;
    color: #3c3c3c;
  }

  input::placeholder {
    color: #8a8a8a;
    opacity: 1;
  }

  input[type='color'] {
    appearance: none;
    width: 34px;
    height: 34px;
    padding: 0;
    border: 2px solid #111;
    border-radius: 50%;
    overflow: hidden;
    background: none;
  }

  input[type='color']::-webkit-color-swatch-wrapper {
    padding: 0;
  }

  input[type='color']::-webkit-color-swatch {
    border: 0;
  }

  .skills,
  .perimeter {
    padding-bottom: 26px;
  }

  .skills-head {
    display: flex;
    justify-content: space-between;
  }

  .skills-head h2 {
    margin: 8px 0 0;
  }

  .primary {
    position: relative;
    height: 53px;
    padding: 0 34px;
    border-radius: 3px;
    background: #056ab1;
    color: #fff;
    font-size: 21px;
    font-weight: 600;
  }

  .add {
    display: flex;
    align-items: center;
    gap: 20px;
    height: 57px;
    margin: 0 3px 0 0;
    padding: 0 35px 0 24px;
  }

  .add svg {
    width: 26px;
    height: 26px;
  }

  .empty {
    height: 56px;
    margin: 34px 0 0;
    padding: 0 26px;
    border: 1px solid #e2e2e2;
    border-radius: 3px;
    background: #fafafa;
    line-height: 54px;
    color: #3c3c3c;
  }

  .map-head {
    display: flex;
    align-items: center;
    justify-content: space-between;
    margin: 34px 0 17px;
  }

  .map {
    position: relative;
    overflow: hidden;
    font-family: Roboto, sans-serif;
  }

  .map-canvas {
    display: block;
    width: 100%;
  }

  .place {
    fill: #202124;
    stroke: #fff;
    stroke-width: 3px;
    stroke-linejoin: round;
    paint-order: stroke;
    font-size: 23px;
    text-anchor: middle;
  }

  .place.city {
    font-size: 29px;
    font-weight: 500;
  }

  .place.area {
    fill: #5f6368;
    font-size: 16px;
    font-weight: 500;
    letter-spacing: 1px;
  }

  .place.shop {
    fill: #1f73e0;
  }

  .place.sight {
    fill: #12858f;
  }

  .place.garden {
    fill: #188045;
  }

  .place.closed {
    fill: #7b8085;
  }

  .place.note {
    font-size: 19px;
  }

  .shield rect {
    fill: #ffdb4d;
    stroke: #d9b13b;
  }

  .shield text {
    fill: #4b3b00;
    font-size: 16px;
    text-anchor: middle;
  }

  .shield.main rect {
    fill: #db6262;
    stroke: #db6262;
  }

  .shield.main text {
    fill: #fff;
    font-weight: 700;
  }

  .google {
    font-size: 30px;
    font-weight: 500;
    stroke: #fff;
    stroke-width: 2px;
    paint-order: stroke;
  }

  .zoom {
    position: absolute;
    top: 346px;
    right: 17px;
    display: grid;
    grid-template-rows: 1fr 1fr;
    width: 66px;
    height: 135px;
    padding: 0 8px;
    border-radius: 3px;
    background: #fff;
    box-shadow: 0 1px 4px rgba(0, 0, 0, 0.3);
  }

  .zoom button {
    display: flex;
    align-items: center;
    justify-content: center;
  }

  .zoom button + button {
    border-top: 2px solid #e6e6e6;
  }

  .zoom svg {
    width: 30px;
    height: 30px;
  }

  .credits {
    position: absolute;
    right: 0;
    bottom: 0;
    display: flex;
    gap: 1px;
    height: 23px;
    color: #000;
    font-size: 16px;
    line-height: 23px;
  }

  .credits > * {
    background: rgba(245, 245, 245, 0.7);
  }

  .source {
    width: 210px;
    padding: 17px 10px 0;
    overflow: hidden;
  }

  .scale {
    display: flex;
    gap: 8px;
    padding: 0 12px 0 9px;
  }

  .scale i {
    width: 134px;
    height: 9px;
    margin-top: 9px;
    border: 3px solid #666;
    border-top: 0;
  }

  .credits a {
    padding: 0 11px;
  }

  .credits button {
    display: flex;
    align-items: center;
    justify-content: center;
    width: 40px;
  }

  .credits svg {
    width: 16px;
    height: 16px;
  }

  .actions {
    display: flex;
    gap: 8px;
    margin-top: 35px;
  }

  .danger {
    height: 53px;
    padding: 0 32px;
    border: 2px solid #e85454;
    border-radius: 3px;
    background: #fff;
    color: #e85454;
    font-size: 21px;
    font-weight: 600;
  }

  .scrollbar {
    width: 24px;
    padding: 98px 4px 4px 6px;
    border-left: 1px solid #e2e2e2;
    background: #fafafa;
  }

  .thumb {
    height: 100%;
    border-radius: 7px;
    background: #c1c1c1;
  }

  .help {
    position: fixed;
    right: 38px;
    bottom: 33px;
    z-index: 3;
    display: flex;
    align-items: center;
    justify-content: center;
    gap: 12px;
    width: 180px;
    height: 77px;
    border-radius: 39px;
    background: #1662f8;
    color: #fff;
    font-size: 26px;
    font-weight: 700;
  }

  .help svg {
    width: 34px;
    height: 34px;
  }
</style>
